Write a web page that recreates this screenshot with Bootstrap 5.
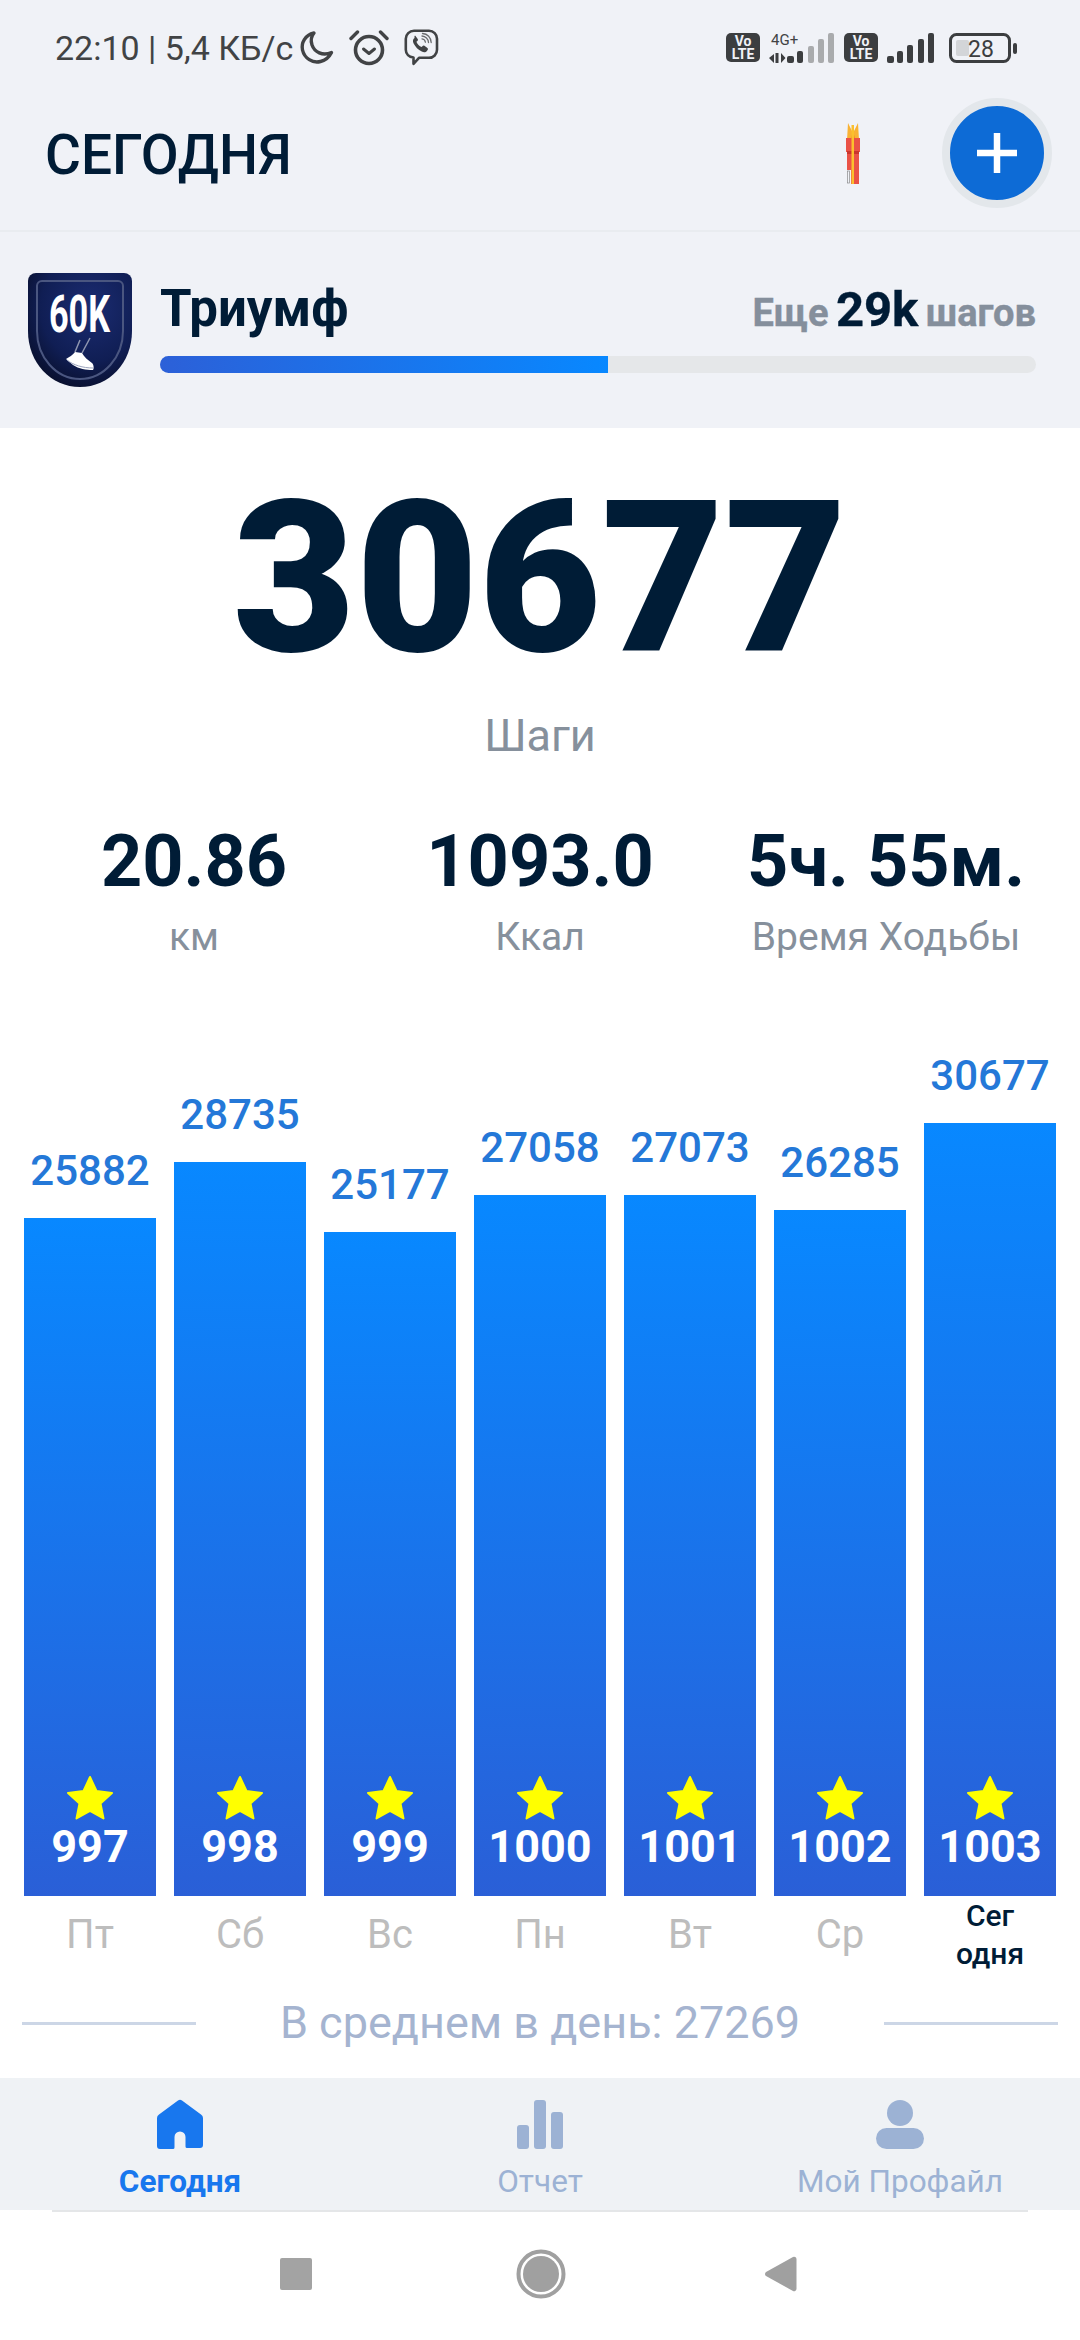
<!DOCTYPE html>
<html lang="ru">
<head>
<meta charset="utf-8">
<title>Сегодня</title>
<link href="https://cdn.jsdelivr.net/npm/bootstrap@5.3.0/dist/css/bootstrap.min.css" rel="stylesheet">
<style>
html,body{margin:0;width:1080px;height:2340px;overflow:hidden;background:#fff}
body{font-family:Roboto,"Liberation Sans",sans-serif;color:#001c36}
.top-zone{background:#f0f2f7}
.sys-bar{height:64px;padding:29px 63px 0 55px;color:#414345}
.sys-time{font-size:34px;line-height:36px;white-space:nowrap}
.sys-right{margin-top:4px}
.volte{width:34px;height:29px;border-radius:5px;background:#3c3e40;color:#f0f2f7;font-size:14px;font-weight:700;line-height:13px;text-align:center;padding-top:2px}
.head-row{height:166px;padding:12px 28px 0 45px}
.head-title{font-size:55px;font-weight:500;line-height:1;margin:4px 0 0}
.rocket-slot{margin-right:82px}
.add-btn{width:110px;height:110px;border:8px solid #e3e7eb;border-radius:50%;background:#0d6bd6;padding:0}
.add-btn:hover,.add-btn:active{background:#0d6bd6!important;border-color:#e3e7eb!important}
.rule-top{height:2px;background:#e9ecf0}
.goal-row{height:196px;padding:0 44px 0 28px;gap:28px}
.goal-title{font-size:51px;font-weight:700;line-height:44px}
.goal-left{font-size:38px;font-weight:700;color:#858f9c;line-height:44px;white-space:nowrap;word-spacing:-2px;-webkit-text-stroke:.4px #858f9c}
.goal-left b{font-size:49px;color:#001c36;font-weight:700;-webkit-text-stroke:.4px #001c36}
.goal-bar{height:17px;border-radius:9px;background:#e5e7e9;margin-top:21px}
.goal-fill{background:linear-gradient(90deg,#2c60d8,#0888ff)}
.big-steps{font-size:212px;font-weight:900;line-height:1;padding-top:45px}
.big-cap{font-size:45px;color:#86909c;line-height:50px;margin-top:26px}
.trio{padding:0 21px;margin-top:49px}
.trio-num{font-size:72px;font-weight:700;line-height:104px;white-space:nowrap}
.trio-cap{font-size:39px;color:#86909c;line-height:46px;white-space:nowrap}
.chart-row{padding:0 24px;height:1014px}
.chart-col{width:132px}
.chart-val{font-size:42px;font-weight:500;color:#2478d8;line-height:50px;margin-bottom:22px;white-space:nowrap}
.chart-bar{background:linear-gradient(180deg,#0888ff,#2a5fd7);color:#fff;padding-bottom:27px}
.bar-num{font-size:45px;font-weight:700;line-height:1;margin-top:4px}
.chart-day{height:78px;font-size:40px;line-height:78px;color:#bdbdbd}
.chart-today{font-size:30px;line-height:38px;font-weight:500;color:#001c36;padding-top:1px}
.avg-row{height:98px;margin-bottom:6px;padding:0 22px;color:#a5b4d0;font-size:45px}
.avg-line{width:174px;height:3px;background:#ccd6e6}
.tab-zone{height:132px;background:#eff2f5}
.tab-cell{padding-top:21px;color:#9cb2d4;font-size:31.500px;line-height:40px}
.tab-on{color:#1877ee;font-weight:700}
.tab-ico{display:block;margin:0 auto;height:50px}
.tab-label{margin-top:13px}
.tab-rule{height:2px;background:#e4e6e8;margin:0 52px}
.soft-nav{height:128px;background:#fff;padding-bottom:4px}
.soft-sq{width:32px;height:32px;border-radius:2px;background:#a3a3a3;margin-left:280px}
.gap-moon{margin-left:6px}
.gap-alarm{margin-left:14px}
.gap-viber{margin-left:15px}
.gap-4g{margin-left:8px}
.gap-4gsvg{margin:-4px 0 0 8px}
.gap-sig{margin-left:9px}
.gap-bat{margin-left:15px}
.gap-circle{margin-left:204px}
.gap-back{margin-left:198px}
</style>
</head>
<body>
<div class="top-zone">
  <div class="sys-bar d-flex justify-content-between align-items-start">
    <div class="d-flex align-items-center">
      <span class="sys-time">22:10 | 5,4 КБ/с</span>
      <svg class="gap-moon" width="36" height="36" viewBox="0 0 36 36" fill="none" stroke="#414345" stroke-width="3.4" stroke-linecap="round" stroke-linejoin="round"><path d="M15 3C6 5 2 13 3.500 20c2 8.500 10 13.500 18 11.500 5.500-1.300 9-5 11-9-9 4-17-.5-19.500-7.500C11.500 10.500 12.500 6 15 3z"/></svg>
      <svg class="gap-alarm" width="40" height="37" viewBox="0 0 40 37" fill="none" stroke="#414345" stroke-linecap="round" stroke-linejoin="round"><circle cx="20" cy="21" r="13.500" stroke-width="3.600"/><path d="M14.500 20l5.500 4.500 5.500-4.500" stroke-width="3"/><path d="M2 9.500L8.500 3M38 9.500L31.500 3" stroke-width="3.400"/></svg>
      <svg class="gap-viber" width="35" height="37" viewBox="0 0 35 37" fill="none" stroke="#414345" stroke-linecap="round" stroke-linejoin="round"><path d="M10 1.800h15c4.500 0 8 3.500 8 8v11c0 4.500-3.500 8-8 8H15l-5.500 6v-6.300C5 28 1.800 25 1.800 20.800v-11c0-4.500 3.700-8 8.200-8z" stroke-width="2.600"/><path d="M10.500 9c-1.800 1.200-1.900 3.400-1 5.300 1.800 3.700 4.700 6.600 8.300 8.300 2.100 1 4 .8 5.300-.9l.6-.9c.5-.7.3-1.400-.3-1.900l-3-2.100c-.7-.4-1.300-.3-1.800.3l-.9 1c-2.500-1-4.300-2.900-5.300-5.300l1-.9c.6-.5.7-1.200.3-1.800l-2-2.800c-.4-.6-.6-.6-1.200-.3z" fill="#414345" stroke="none"/><path d="M18 7c3.500.2 6.300 3 6.500 6.500M18.500 4.500c5 .3 8.500 4 8.700 9M18 9.800c1.800.2 3.200 1.600 3.400 3.400" stroke-width="1.300" stroke="#6b6d6f"/></svg>
    </div>
    <div class="d-flex align-items-start sys-right">
      <div class="volte">Vo<br>LTE</div>
      <svg class="gap-4gsvg" width="68" height="36" viewBox="0 -4 68 36"><text x="3" y="12" font-family="Roboto,sans-serif" font-size="15" fill="#414345">4G+</text><path d="M1 25l5-4v9zM7.500 20h3v10h-3zM13 20l4.500 5-4.500 5z" fill="#3c3e40"/><g fill="#3c3e40"><rect x="19" y="23" width="7" height="7" rx="2"/><rect x="29" y="18" width="6" height="12" rx="2"/></g><g fill="#a9abad"><rect x="40" y="13" width="6" height="17" rx="2"/><rect x="50" y="6" width="6" height="24" rx="2"/><rect x="60" y="0" width="6" height="30" rx="2"/></g></svg>
      <div class="volte gap-4g">Vo<br>LTE</div>
      <svg class="gap-sig" width="47" height="31" viewBox="0 0 47 31" fill="#3c3e40"><rect x="0" y="23" width="7" height="7" rx="2"/><rect x="10" y="18" width="6" height="12" rx="2"/><rect x="20" y="12" width="6" height="18" rx="2"/><rect x="31" y="6" width="6" height="24" rx="2"/><rect x="41" y="0" width="6" height="30" rx="2"/></svg>
      <svg class="gap-bat" width="68" height="31" viewBox="0 0 68 31"><rect x="1.500" y="1.500" width="59" height="27" rx="6" fill="none" stroke="#3c3e40" stroke-width="3"/><rect x="7" y="7" width="13" height="16" rx="2" fill="#d3d5d8"/><text x="32" y="23.500" text-anchor="middle" font-family="Roboto,sans-serif" font-size="23" fill="#3c3e40">28</text><rect x="64" y="10" width="4" height="11" rx="2" fill="#3c3e40"/></svg>
    </div>
  </div>
  <div class="head-row d-flex align-items-center justify-content-between">
    <h1 class="head-title">СЕГОДНЯ</h1>
    <div class="d-flex align-items-center">
      <svg class="rocket-slot" width="14" height="62" viewBox="0 0 14 62"><path d="M1 18L2 1l5 10 5-10 1 17z" fill="#f9b233"/><path d="M4.500 18L7 9l2.500 9z" fill="#f08a24"/><rect x="0" y="16" width="14" height="14" fill="#ea5246"/><rect x="1" y="30" width="12" height="32" fill="#ea5246"/><rect x="1" y="29" width="12" height="3" fill="#c9362e"/><rect x="5.500" y="3" width="2.500" height="59" fill="#fbc02d"/><rect x="0" y="48" width="5" height="14" fill="#f0f2f7"/><rect x="1.500" y="49" width="2" height="12" fill="none" stroke="#8a8a8a" stroke-width=".7"/></svg>
      <button class="btn add-btn d-flex align-items-center justify-content-center" type="button" aria-label="Добавить"><svg width="40" height="40" viewBox="0 0 40 40" fill="#fff"><rect x="16.750" y="0" width="6.500" height="40"/><rect x="0" y="16.750" width="40" height="6.500"/></svg></button>
    </div>
  </div>
  <div class="rule-top"></div>
  <div class="goal-row d-flex align-items-center">
    <svg width="104" height="114" viewBox="0 0 104 114" class="flex-shrink-0">
      <defs><radialGradient id="bg60" cx=".6" cy=".3" r=".8"><stop offset="0" stop-color="#1b2c72"/><stop offset=".6" stop-color="#101e54"/><stop offset="1" stop-color="#070c24"/></radialGradient></defs>
      <path d="M8 0h88a8 8 0 0 1 8 8v50c0 32-23 56-52 56S0 90 0 58V8a8 8 0 0 1 8-8z" fill="url(#bg60)"/>
      <path d="M14 8h76a5 5 0 0 1 5 5v45c0 26-19 48-43 48S9 84 9 58V13a5 5 0 0 1 5-5z" fill="none" stroke="#4a5680" stroke-width="2"/>
      <text transform="translate(51.500 59) scale(.66 1)" text-anchor="middle" font-family="Roboto,sans-serif" font-size="52" font-weight="700" fill="#fff">60K</text>
      <path d="M52 67l-5 12M62 65l-8 15" stroke="#8f96b0" stroke-width="1.500" fill="none"/>
      <path d="M47 79l7 1c2 4 6 7 10 10 2 2 2 6 1 7-7 0-14-1-20-5l-7-6c3-2 7-4 9-7z" fill="#fff"/>
      <path d="M39 87c6 5 16 8 26 8" stroke="#9aa3bd" stroke-width="1" fill="none"/>
    </svg>
    <div class="flex-grow-1">
      <div class="d-flex justify-content-between align-items-baseline">
        <div class="goal-title">Триумф</div>
        <div class="goal-left">Еще <b>29k</b> шагов</div>
      </div>
      <div class="progress goal-bar"><div class="progress-bar goal-fill" style="width:51.1%"></div></div>
    </div>
  </div>
</div>

<main>
  <div class="big-steps text-center">30677</div>
  <div class="big-cap text-center">Шаги</div>
  <div class="row g-0 trio text-center">
    <div class="col-4"><div class="trio-num">20.86</div><div class="trio-cap">км</div></div>
    <div class="col-4"><div class="trio-num">1093.0</div><div class="trio-cap">Ккал</div></div>
    <div class="col-4"><div class="trio-num">5ч. 55м.</div><div class="trio-cap">Время Ходьбы</div></div>
  </div>
  <div class="chart-row d-flex justify-content-between align-items-end">
    <div class="chart-col text-center"><div class="chart-val">25882</div><div class="chart-bar d-flex flex-column justify-content-end align-items-center" style="height:678px"><svg width="48" height="45" viewBox="0 0 48 45"><path d="M24 2l6.500 14 15.500 2-11.500 10.500 3 15L24 36l-13.500 7.500 3-15L2 18l15.500-2z" fill="#ff0" stroke="#ff0" stroke-width="2" stroke-linejoin="round"/></svg><div class="bar-num">997</div></div><div class="chart-day">Пт</div></div>
    <div class="chart-col text-center"><div class="chart-val">28735</div><div class="chart-bar d-flex flex-column justify-content-end align-items-center" style="height:734px"><svg width="48" height="45" viewBox="0 0 48 45"><path d="M24 2l6.500 14 15.500 2-11.500 10.500 3 15L24 36l-13.500 7.500 3-15L2 18l15.500-2z" fill="#ff0" stroke="#ff0" stroke-width="2" stroke-linejoin="round"/></svg><div class="bar-num">998</div></div><div class="chart-day">Сб</div></div>
    <div class="chart-col text-center"><div class="chart-val">25177</div><div class="chart-bar d-flex flex-column justify-content-end align-items-center" style="height:664px"><svg width="48" height="45" viewBox="0 0 48 45"><path d="M24 2l6.500 14 15.500 2-11.500 10.500 3 15L24 36l-13.500 7.500 3-15L2 18l15.500-2z" fill="#ff0" stroke="#ff0" stroke-width="2" stroke-linejoin="round"/></svg><div class="bar-num">999</div></div><div class="chart-day">Вс</div></div>
    <div class="chart-col text-center"><div class="chart-val">27058</div><div class="chart-bar d-flex flex-column justify-content-end align-items-center" style="height:701px"><svg width="48" height="45" viewBox="0 0 48 45"><path d="M24 2l6.500 14 15.500 2-11.500 10.500 3 15L24 36l-13.500 7.500 3-15L2 18l15.500-2z" fill="#ff0" stroke="#ff0" stroke-width="2" stroke-linejoin="round"/></svg><div class="bar-num">1000</div></div><div class="chart-day">Пн</div></div>
    <div class="chart-col text-center"><div class="chart-val">27073</div><div class="chart-bar d-flex flex-column justify-content-end align-items-center" style="height:701px"><svg width="48" height="45" viewBox="0 0 48 45"><path d="M24 2l6.500 14 15.500 2-11.500 10.500 3 15L24 36l-13.500 7.500 3-15L2 18l15.500-2z" fill="#ff0" stroke="#ff0" stroke-width="2" stroke-linejoin="round"/></svg><div class="bar-num">1001</div></div><div class="chart-day">Вт</div></div>
    <div class="chart-col text-center"><div class="chart-val">26285</div><div class="chart-bar d-flex flex-column justify-content-end align-items-center" style="height:686px"><svg width="48" height="45" viewBox="0 0 48 45"><path d="M24 2l6.500 14 15.500 2-11.500 10.500 3 15L24 36l-13.500 7.500 3-15L2 18l15.500-2z" fill="#ff0" stroke="#ff0" stroke-width="2" stroke-linejoin="round"/></svg><div class="bar-num">1002</div></div><div class="chart-day">Ср</div></div>
    <div class="chart-col text-center"><div class="chart-val">30677</div><div class="chart-bar d-flex flex-column justify-content-end align-items-center" style="height:773px"><svg width="48" height="45" viewBox="0 0 48 45"><path d="M24 2l6.500 14 15.500 2-11.500 10.500 3 15L24 36l-13.500 7.500 3-15L2 18l15.500-2z" fill="#ff0" stroke="#ff0" stroke-width="2" stroke-linejoin="round"/></svg><div class="bar-num">1003</div></div><div class="chart-day chart-today">Сег<br>одня</div></div>
  </div>
  <div class="avg-row d-flex align-items-center justify-content-between">
    <div class="avg-line"></div><div>В среднем в день: 27269</div><div class="avg-line"></div>
  </div>
</main>

<div class="tab-zone row g-0 text-center">
  <div class="col-4 tab-cell tab-on"><svg class="tab-ico" width="46" height="50" viewBox="0 0 46 50"><path d="M21 1.500a3.500 3.500 0 0 1 4 0l19 14a4 4 0 0 1 2 3.500v27a3 3 0 0 1-3 3H30a1.500 1.500 0 0 1-1.500-1.500V38a5.500 5.500 0 0 0-11 0v10.500A1.500 1.500 0 0 1 16 50H3a3 3 0 0 1-3-3V19a4 4 0 0 1 2-3.500z" fill="#1877ee"/></svg><div class="tab-label">Сегодня</div></div>
  <div class="col-4 tab-cell"><svg class="tab-ico" width="46" height="50" viewBox="0 0 46 50" fill="#9cb2d4"><rect x="0" y="26" width="12" height="24" rx="3"/><rect x="17" y="1" width="12" height="49" rx="3"/><rect x="34" y="13" width="12" height="37" rx="3"/></svg><div class="tab-label">Отчет</div></div>
  <div class="col-4 tab-cell"><svg class="tab-ico" width="48" height="50" viewBox="0 0 48 50" fill="#9cb2d4"><circle cx="24" cy="14" r="13"/><rect x="0" y="29" width="48" height="21" rx="10.500"/></svg><div class="tab-label">Мой Профайл</div></div>
</div>
<div class="tab-rule"></div>
<div class="soft-nav d-flex align-items-center">
  <div class="soft-sq"></div>
  <svg class="gap-circle" width="50" height="50" viewBox="0 0 50 50"><circle cx="25" cy="25" r="22.500" fill="none" stroke="#a0a0a0" stroke-width="4"/><circle cx="25" cy="25" r="18" fill="#a0a0a0"/></svg>
  <svg class="gap-back" width="33" height="38" viewBox="0 0 33 38"><path d="M29 2a2.500 2.500 0 0 1 3.500 2v30a2.500 2.500 0 0 1-3.500 2L2 21a2.500 2.500 0 0 1 0-4z" fill="#a0a0a0"/></svg>
</div>
</body>
</html>
